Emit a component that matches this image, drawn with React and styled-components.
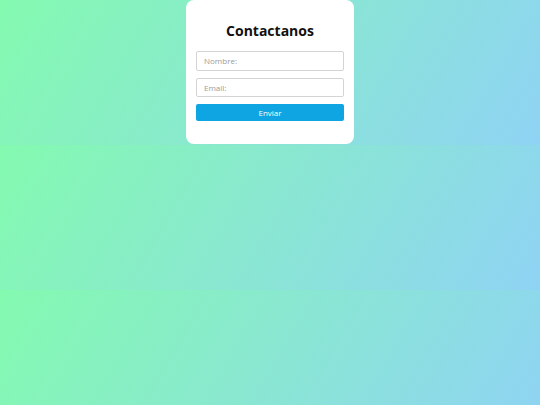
import React from "react";
import styled, { createGlobalStyle } from "styled-components";

const Global = createGlobalStyle`
  body {
    margin: 0;
    background: linear-gradient(120deg, #84fab0 0%, #8fd3f4 100%);
    font-family: "Open Sans", "Liberation Sans", sans-serif;
  }
`;

const Page = styled.div`
  display: flex;
  justify-content: center;
  padding-bottom: 1px;
`;

const Card = styled.form`
  width: 168px;
  box-sizing: border-box;
  background: #ffffff;
  border-radius: 8px;
  padding: 20px 10px 23px;
  display: flex;
  flex-direction: column;
`;

const Title = styled.h1`
  margin: 0 0 9px;
  font-size: 14px;
  font-weight: 700;
  color: #111;
  text-align: center;
  line-height: 22px;
`;

const Input = styled.input`
  box-sizing: border-box;
  height: 19.5px;
  width: 100%;
  margin: 0 0 7px;
  padding: 0 7px;
  border: 1px solid #d4d4d4;
  border-radius: 2px;
  font-family: inherit;
  font-size: 8px;
  color: #333;
  outline: none;
  &::placeholder {
    color: #9a9a9a;
  }
`;

const Button = styled.button`
  height: 17px;
  width: 100%;
  border: none;
  border-radius: 2px;
  background: #0ea5e2;
  color: #ffffff;
  font-family: inherit;
  font-size: 8px;
  padding: 0;
  cursor: pointer;
`;

export default function App() {
  return (
    <>
      <Global />
      <Page>
        <Card onSubmit={(e) => e.preventDefault()}>
          <Title>Contactanos</Title>
          <Input placeholder="Nombre:" />
          <Input placeholder="Email:" />
          <Button type="submit">Enviar</Button>
        </Card>
      </Page>
    </>
  );
}
